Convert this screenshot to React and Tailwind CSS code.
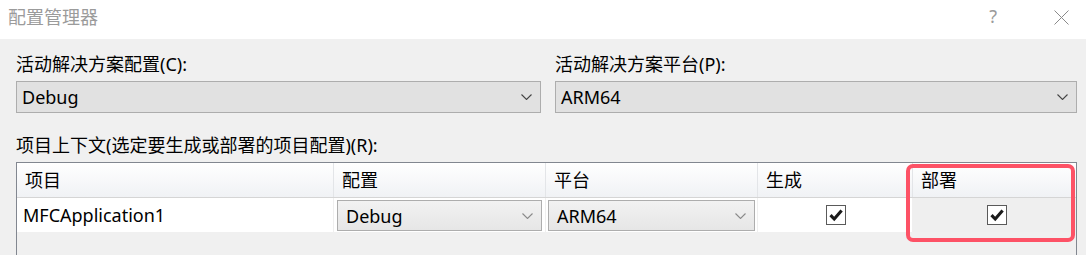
import React from "react";

const FONT = { fontFamily: '"Noto Sans", "Noto Sans CJK SC", sans-serif' };

function Chevron({ color = "#555" }) {
  return (
    <svg width="11" height="6" viewBox="0 0 11 6" fill="none">
      <path d="M0.5 0.5 L5.5 5.5 L10.5 0.5" stroke={color} strokeWidth="1.1" />
    </svg>
  );
}

function CheckBox() {
  return (
    <div className="w-[20px] h-[20px] border border-[#5a5a5a] bg-white flex items-center justify-center">
      <svg width="16" height="16" viewBox="0 0 16 16" fill="none">
        <path d="M2.5 8.2 L6.2 12 L13.6 3.4" stroke="#1a1a1a" strokeWidth="3.1" strokeLinejoin="miter" />
      </svg>
    </div>
  );
}

function Combo({ text }) {
  return (
    <div className="h-[32px] border border-[#adadad] bg-[#e1e1e1] flex items-center justify-between pl-[5px] pr-[8px]">
      <span className="text-[18px] leading-[24px] text-black">{text}</span>
      <Chevron color="#444" />
    </div>
  );
}

function CellCombo({ text }) {
  return (
    <div className="h-[31px] border border-[#adadad] bg-gradient-to-b from-[#f2f2f2] to-[#e6e6e6] flex items-center justify-between pl-[8px] pr-[8px]">
      <span className="text-[18px] leading-[24px] text-black">{text}</span>
      <Chevron color="#8a8a8a" />
    </div>
  );
}

export default function App() {
  const header = ["项目", "配置", "平台", "生成", "部署"];
  return (
    <div className="relative w-[1086px] h-[255px] overflow-hidden bg-[#f0f0f0] flex flex-col" style={FONT}>
      {/* Title bar */}
      <div className="h-[39px] bg-white flex items-start justify-between shrink-0">
        <div className="pl-[8px] pt-[5px] text-[18px] leading-[24px] text-[#9b9b9b]">配置管理器</div>
        <div className="flex items-start">
          <div className="pt-[4px] text-[18px] leading-[24px] text-[#9b9b9b] mr-[57px]">?</div>
          <div className="pt-[10px] mr-[17px]">
            <svg width="15" height="15" viewBox="0 0 15 15" fill="none">
              <path d="M0.5 0.5 L14.5 14.5 M14.5 0.5 L0.5 14.5" stroke="#8a8a8a" strokeWidth="1" />
            </svg>
          </div>
        </div>
      </div>

      {/* Content */}
      <div className="flex-1 flex flex-col pl-[16px] pr-[9px] pt-[13px]">
        <div className="grid grid-cols-[525px_1fr] gap-x-[14px]">
          <div className="flex flex-col">
            <div className="text-[18px] leading-[24px] text-black">活动解决方案配置(C):</div>
            <div className="mt-[5px]"><Combo text="Debug" /></div>
          </div>
          <div className="flex flex-col">
            <div className="text-[18px] leading-[24px] text-black">活动解决方案平台(P):</div>
            <div className="mt-[5px]"><Combo text="ARM64" /></div>
          </div>
        </div>

        <div className="mt-[20px] text-[18px] leading-[24px] text-black">项目上下文(选定要生成或部署的项目配置)(R):</div>

        <div className="mt-[5px] flex-1 border-t border-l border-r border-[#828790] flex flex-col">
          {/* header */}
          <div className="grid grid-cols-[317px_212px_212px_155px_1fr] h-[35px] border-b border-[#d5d5d5] bg-gradient-to-b from-white to-[#f0f2f5]">
            {header.map((h, i) => (
              <div
                key={h}
                className={
                  "flex items-center pl-[8px] text-[18px] leading-[24px] text-black " +
                  (i < 4 ? "border-r border-[#e3e5e8]" : "")
                }
              >
                {h}
              </div>
            ))}
          </div>
          {/* data row */}
          <div className="grid grid-cols-[317px_212px_212px_155px_1fr] h-[34px] bg-white">
            <div className="flex items-center pl-[6px] text-[18px] leading-[24px] text-black border-r border-[#efefef]">
              MFCApplication1
            </div>
            <div className="pt-[2px] px-[3px] border-r border-[#efefef]">
              <CellCombo text="Debug" />
            </div>
            <div className="pt-[2px] pl-[2px] pr-[2px] border-r border-[#efefef]">
              <CellCombo text="ARM64" />
            </div>
            <div className="flex items-center justify-center pl-[2px] border-r border-[#efefef]">
              <CheckBox />
            </div>
            <div className="flex items-center justify-center pl-[4px] bg-[#efefef]">
              <CheckBox />
            </div>
          </div>
          <div className="flex-1" />
        </div>
      </div>

      {/* Red highlight overlay */}
      <div className="absolute left-[906px] top-[164px] w-[169px] h-[78px] border-4 border-[#fd5266] rounded-[7px] pointer-events-none" />
    </div>
  );
}
